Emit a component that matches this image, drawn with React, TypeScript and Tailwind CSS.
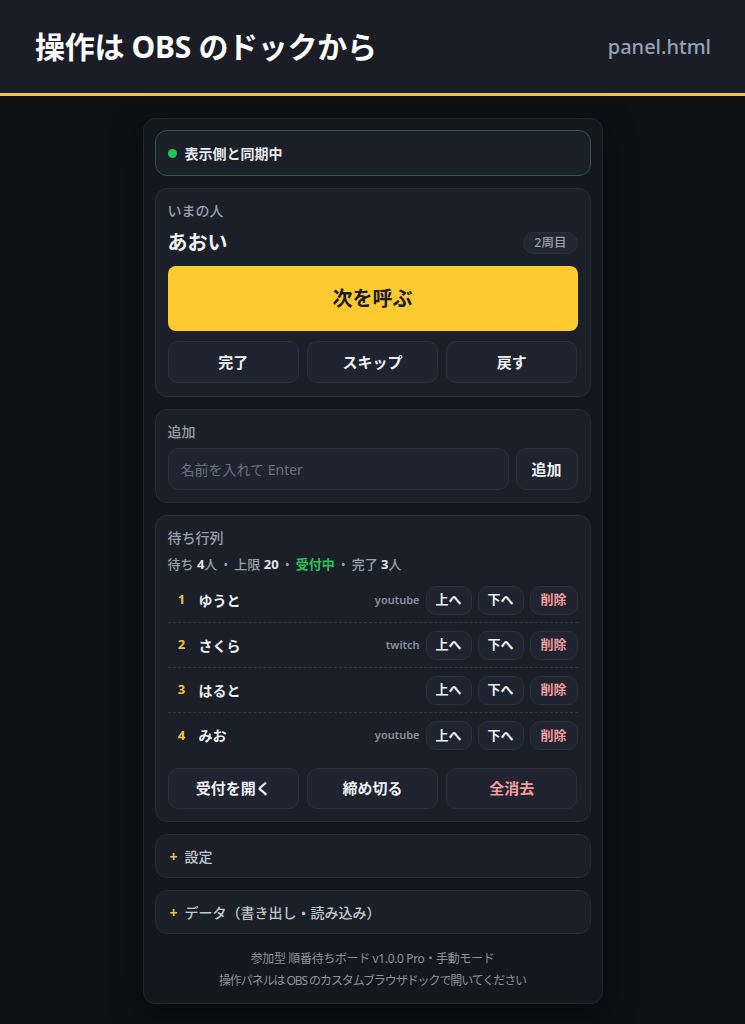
import React from "react";

const font = { fontFamily: '"Noto Sans", "Noto Sans CJK JP", sans-serif' };

function Btn({ children, red, cls = "" }: { children: React.ReactNode; red?: boolean; cls?: string }) {
  return (
    <button
      className={
        "flex items-center justify-center rounded-[10px] border border-[#2a303c] bg-[#1f2430] font-bold " +
        (red ? "text-[#f39c9c] " : "text-[#eef0f4] ") +
        cls
      }
    >
      {children}
    </button>
  );
}

const rows = [
  { n: 1, name: "ゆうと", src: "youtube" },
  { n: 2, name: "さくら", src: "twitch" },
  { n: 3, name: "はると", src: "" },
  { n: 4, name: "みお", src: "youtube" },
];

function Dot() {
  return <span className="mx-[2px]">・</span>;
}

export default function App() {
  return (
    <div className="min-h-[1024px] bg-[#0e1014] pb-5" style={font}>
      <header className="flex h-[96px] items-center justify-between border-b-[3px] border-[#f2c440] bg-[#1a1d26] pl-[35px] pr-[34px]">
        <h1 className="text-[30px] font-bold tracking-[-0.01em] text-white">操作は OBS のドックから</h1>
        <span className="text-[20px] font-medium text-[#94a3b8]">panel.html</span>
      </header>

      <div className="mx-auto mt-[22px] flex w-[460px] flex-col gap-3 rounded-xl border border-[#22262e] bg-[#14171d] p-[11px] shadow-[0_10px_30px_rgba(0,0,0,0.5)]">
        {/* status */}
        <div className="flex h-[46px] items-center gap-2 rounded-xl border border-[#2c5a40] bg-[#1b1f28] px-3">
          <span className="h-[9px] w-[9px] rounded-full bg-[#22c55e]" />
          <span className="text-[14px] font-bold text-[#e8eaee]">表示側と同期中</span>
        </div>

        {/* current */}
        <div className="rounded-xl border border-[#272c36] bg-[#1b1f28] px-3 pb-[13px] pt-3">
          <div className="text-[14px] font-medium leading-5 text-[#9aa1ad]">いまの人</div>
          <div className="mt-2 flex h-7 items-center justify-between">
            <span className="text-[20px] font-bold text-[#f2f3f5]">あおい</span>
            <span className="flex h-[22px] items-center rounded-full border border-[#2c323d] bg-[#222733] px-2.5 text-[12.5px] font-medium text-[#9aa1ad]">
              2周目
            </span>
          </div>
          <button className="mt-[9px] flex h-[65px] w-full items-center justify-center rounded-lg bg-[#fdca30] text-[20px] font-bold text-[#1c1a12]">
            次を呼ぶ
          </button>
          <div className="mt-2.5 grid grid-cols-3 gap-2">
            <Btn cls="h-[42px] text-[15px]">完了</Btn>
            <Btn cls="h-[42px] text-[15px]">スキップ</Btn>
            <Btn cls="h-[42px] text-[15px]">戻す</Btn>
          </div>
        </div>

        {/* add */}
        <div className="rounded-xl border border-[#272c36] bg-[#1b1f28] p-3">
          <div className="text-[14px] font-medium leading-5 text-[#9aa1ad]">追加</div>
          <div className="mt-1.5 flex gap-[7px]">
            <div className="flex h-[42px] flex-1 items-center rounded-[10px] border border-[#2a303c] bg-[#1f2430] px-3 text-[14px] text-[#6b7280]">
              名前を入れて Enter
            </div>
            <Btn cls="h-[42px] w-[62px] text-[15px]">追加</Btn>
          </div>
        </div>

        {/* queue */}
        <div className="rounded-xl border border-[#272c36] bg-[#1b1f28] p-3">
          <div className="text-[14px] font-medium leading-5 text-[#9aa1ad]">待ち行列</div>
          <div className="mt-1.5 text-[13px] font-medium leading-5 text-[#9aa1ad]">
            待ち <b className="text-[#e5e7eb]">4</b>人<Dot />上限 <b className="text-[#e5e7eb]">20</b>
            <Dot />
            <b className="text-[#22c55e]">受付中</b>
            <Dot />完了 <b className="text-[#e5e7eb]">3</b>人
          </div>
          <div className="mt-1">
            {rows.map((r, i) => (
              <div
                key={r.n}
                className={
                  "flex h-[45px] items-center pl-[6px] " +
                  (i < rows.length - 1 ? "border-b border-dashed border-[#323845]" : "")
                }
              >
                <span className="w-4 text-center text-[13px] font-bold text-[#f2c440]">{r.n}</span>
                <span className="ml-[9px] text-[14px] font-bold text-[#eef0f4]">{r.name}</span>
                <span className="ml-auto mr-[6px] text-[11px] font-semibold text-[#8a92a0]">{r.src}</span>
                <div className="flex gap-[6px]">
                  <Btn cls="h-[29px] w-[46px] text-[13px]">上へ</Btn>
                  <Btn cls="h-[29px] w-[46px] text-[13px]">下へ</Btn>
                  <Btn red cls="h-[29px] w-[48px] text-[13px]">削除</Btn>
                </div>
              </div>
            ))}
          </div>
          <div className="mt-2.5 grid grid-cols-3 gap-2">
            <Btn cls="h-[41px] text-[15px]">受付を開く</Btn>
            <Btn cls="h-[41px] text-[15px]">締め切る</Btn>
            <Btn red cls="h-[41px] text-[15px]">全消去</Btn>
          </div>
        </div>

        {/* collapsibles */}
        <div className="flex h-[44px] items-center gap-[7px] rounded-xl border border-[#272c36] bg-[#1b1f28] px-3.5 text-[14px] font-medium text-[#c3c8d0]">
          <span className="font-bold text-[#f2c440]">+</span>
          <span>設定</span>
        </div>
        <div className="flex h-[44px] items-center gap-[7px] rounded-xl border border-[#272c36] bg-[#1b1f28] px-3.5 text-[14px] font-medium text-[#c3c8d0]">
          <span className="font-bold text-[#f2c440]">+</span>
          <span>データ（書き出し・読み込み）</span>
        </div>

        <div className="mt-0.5 text-center text-[12px] leading-[22px] text-[#8b929e]">
          <div className="tracking-[-0.03em]">参加型 順番待ちボード v1.0.0 Pro・手動モード</div>
          <div className="tracking-[-0.09em]">操作パネルは OBS のカスタムブラウザドックで開いてください</div>
        </div>
      </div>
    </div>
  );
}
